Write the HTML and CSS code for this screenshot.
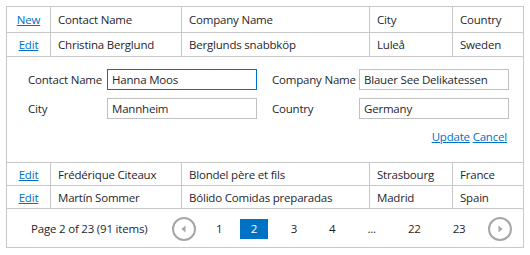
FILE: index.html
```html
<!DOCTYPE html>
<html lang="en">
<head>
    <meta charset="UTF-8">
    <title>Customers Grid</title>
    <link rel="stylesheet" href="styles.css">
</head>
<body>
    <table class="grid">
        <colgroup>
            <col class="col-cmd">
            <col class="col-contact">
            <col class="col-company">
            <col class="col-city">
            <col class="col-country">
        </colgroup>
        <thead>
            <tr class="header-row">
                <th class="cmd"><a href="#">New</a></th>
                <th>Contact Name</th>
                <th>Company Name</th>
                <th>City</th>
                <th>Country</th>
            </tr>
        </thead>
        <tbody>
            <tr class="data-row first">
                <td class="cmd"><a href="#">Edit</a></td>
                <td>Christina Berglund</td>
                <td>Berglunds snabbköp</td>
                <td>Luleå</td>
                <td>Sweden</td>
            </tr>
            <tr class="edit-row">
                <td colspan="5">
                    <div class="edit-form">
                        <label>Contact Name</label>
                        <input type="text" class="focused" value="Hanna Moos">
                        <label>Company Name</label>
                        <input type="text" value="Blauer See Delikatessen">
                        <label>City</label>
                        <input type="text" value="Mannheim">
                        <label>Country</label>
                        <input type="text" value="Germany">
                    </div>
                    <div class="edit-actions">
                        <a href="#">Update</a>
                        <a href="#">Cancel</a>
                    </div>
                </td>
            </tr>
            <tr class="data-row">
                <td class="cmd"><a href="#">Edit</a></td>
                <td>Frédérique Citeaux</td>
                <td>Blondel père et fils</td>
                <td>Strasbourg</td>
                <td>France</td>
            </tr>
            <tr class="data-row">
                <td class="cmd"><a href="#">Edit</a></td>
                <td>Martín Sommer</td>
                <td>Bólido Comidas preparadas</td>
                <td>Madrid</td>
                <td>Spain</td>
            </tr>
        </tbody>
        <tfoot>
            <tr class="pager-row">
                <td colspan="5">
                    <div class="pager">
                        <span class="summary">Page 2 of 23 (91 items)</span>
                        <a href="#" class="arrow prev">
                            <svg width="24" height="24" viewBox="0 0 24 24">
                                <circle cx="12" cy="12" r="11" fill="none" stroke="#a6a6a6" stroke-width="2"/>
                                <path d="M13.5 8.5 L9.5 12 L13.5 15.5 Z" fill="#a6a6a6"/>
                            </svg>
                        </a>
                        <a href="#" class="page first-page">1</a>
                        <span class="page current">2</span>
                        <a href="#" class="page">3</a>
                        <a href="#" class="page">4</a>
                        <span class="page dots">...</span>
                        <a href="#" class="page">22</a>
                        <a href="#" class="page">23</a>
                        <a href="#" class="arrow next">
                            <svg width="24" height="24" viewBox="0 0 24 24">
                                <circle cx="12" cy="12" r="11" fill="none" stroke="#a6a6a6" stroke-width="2"/>
                                <path d="M10.5 8.5 L14.5 12 L10.5 15.5 Z" fill="#a6a6a6"/>
                            </svg>
                        </a>
                    </div>
                </td>
            </tr>
        </tfoot>
    </table>
</body>
</html>
```

FILE: styles.css
```css
* {
    box-sizing: border-box;
}

body {
    margin: 0;
    padding: 6px;
    background-color: #fff;
    font-family: "Open Sans", Arial, sans-serif;
    font-size: 11.5px;
    letter-spacing: -0.2px;
    color: #1f1f2e;
}

a {
    color: #0072c6;
}

.grid {
    width: 517px;
    border-collapse: collapse;
    table-layout: fixed;
    border: 1px solid #c8c8c8;
}

.col-cmd { width: 44px; }
.col-contact { width: 131px; }
.col-company { width: 188px; }
.col-city { width: 83px; }
.col-country { width: 71px; }

.grid th,
.grid td {
    border: 1px solid #c8c8c8;
    padding: 0 7px;
    text-align: left;
    font-weight: normal;
    white-space: nowrap;
    overflow: hidden;
}

.grid .cmd {
    text-align: center;
    padding: 0;
}

.header-row th {
    height: 26px;
}

.data-row td {
    height: 23px;
}

.data-row.first td {
    height: 24px;
}

/* Edit form */
.edit-row td {
    height: 106px;
    padding: 12px 13px 0 21px;
    vertical-align: top;
}

.edit-form {
    display: grid;
    grid-template-columns: 79px 150px 102px 150px;
    row-gap: 8px;
    align-items: center;
}

.edit-form input {
    width: 150px;
    height: 21px;
    border: 1px solid #c0c0c0;
    padding: 0 4px;
    font-family: inherit;
    font-size: inherit;
    letter-spacing: inherit;
    color: #1f1f2e;
    outline: none;
}

.edit-form input.focused {
    border-color: #0072c6;
}

.edit-form label:nth-of-type(even) {
    padding-left: 15px;
}

.edit-actions {
    text-align: right;
    margin-top: 10px;
    padding-right: 3px;
}

/* Pager */
.pager-row td {
    height: 39px;
    padding: 1px 0 0 24px;
}

.pager {
    display: flex;
    align-items: center;
}

.summary {
    margin-right: 25px;
}

.arrow {
    display: flex;
}

.arrow svg {
    display: block;
}

.page {
    color: #1f1f2e;
    text-decoration: none;
    padding: 0 9.5px;
    margin-left: 13px;
    line-height: 20px;
}

.page.first-page {
    margin-left: 10px;
}

.page.current {
    background-color: #0072c6;
    color: #fff;
    padding: 0 11px;
    margin-left: 8px;
}

.next {
    margin-left: 13px;
}
```
